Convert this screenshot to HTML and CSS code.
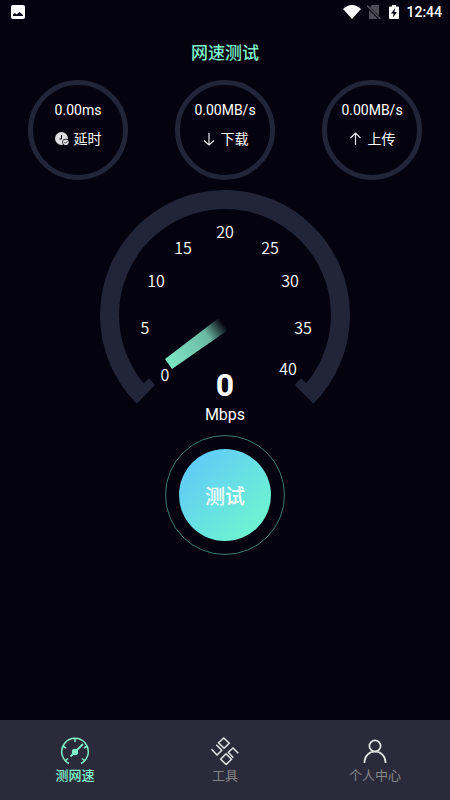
FILE: index.html
```html
<!DOCTYPE html>
<html lang="zh-CN">
<head>
<meta charset="utf-8">
<meta name="viewport" content="width=device-width, initial-scale=1">
<title>网速测试</title>
<link rel="stylesheet" href="styles.css">
</head>
<body>
<div class="app">
  <header class="status">
    <svg class="status-picture" viewBox="0 0 14 14" width="14" height="14" aria-hidden="true"><rect width="14" height="14" rx="2" fill="#fff"/><path d="M2 11V9.500L4 8L5.500 9.500L8.500 7L12 10V11Z" fill="#05030f"/></svg>
    <div class="status-right">
      <svg viewBox="0 0 18 14" width="18" height="14" aria-hidden="true"><path d="M0 4Q9-4 18 4L9 14Z" fill="#fff"/></svg>
      <svg class="status-sim" viewBox="0 0 14 14" width="14" height="14" aria-hidden="true"><path d="M5 0H12V14H2V3Z" fill="#4d4b56"/><path d="M0 1L13 14" stroke="#05030f" stroke-width="3"/><path d="M0 0.500L13.500 14" stroke="#5b5963" stroke-width="1.300"/></svg>
      <svg class="status-battery" viewBox="0 0 10 14" width="10" height="14" aria-hidden="true"><path d="M3 0H7V1.500H9Q10 1.500 10 2.500V13Q10 14 9 14H1Q0 14 0 13V2.500Q0 1.500 1 1.500H3Z" fill="#fff"/><path d="M6 3L2 8.500H4.500L4 12.500L8 7H5.500Z" fill="#05030f"/></svg>
      <time class="clock">12:44</time>
    </div>
  </header>
  <main>
    <h1 class="title">网速测试</h1>
    <section class="metrics">
      <div class="metric">
        <span class="value">0.00ms</span>
        <span class="label">
          <svg viewBox="0 0 14 14" width="14" height="14" aria-hidden="true"><circle cx="6.500" cy="6.500" r="6.500" fill="#dedee0"/><path d="M6.500 3V7H4.500" fill="none" stroke="#05030f"/><circle cx="10.800" cy="10.200" r="3.500" fill="#05030f"/><circle cx="10.800" cy="10.200" r="2.800" fill="#dedee0"/><path d="M9.500 10.200L10.500 11.200L12.300 9.300" fill="none" stroke="#05030f" stroke-width=".8"/></svg>
          延时
        </span>
      </div>
      <div class="metric">
        <span class="value">0.00MB/s</span>
        <span class="label">
          <svg viewBox="0 0 14 14" width="14" height="14" aria-hidden="true"><path d="M7 1V13M2 8.500L7 13L12 8.500" fill="none" stroke="#e6e6e8" stroke-width="1.200"/></svg>
          下载
        </span>
      </div>
      <div class="metric">
        <span class="value">0.00MB/s</span>
        <span class="label">
          <svg viewBox="0 0 14 14" width="14" height="14" aria-hidden="true"><path d="M6.500 13V1M1.500 6L6.500 1L11.500 6" fill="none" stroke="#e6e6e8" stroke-width="1.200"/></svg>
          上传
        </span>
      </div>
    </section>
    <section class="gauge">
      <svg class="dial" viewBox="0 0 250 214" aria-label="0 Mbps" role="img">
        <defs>
          <linearGradient id="needle" gradientUnits="userSpaceOnUse" x1="68" y1="174" x2="124" y2="134">
            <stop offset="0" stop-color="#7ee8c6"/>
            <stop offset=".7" stop-color="#6bb9a3"/>
            <stop offset="1" stop-color="#6bb9a3" stop-opacity="0"/>
          </linearGradient>
        </defs>
        <path d="M43.300 206.700A115.500 115.500 0 1 1 206.700 206.700" fill="none" stroke="#222438" stroke-width="19"/>
        <path d="M36.600 213.400L55 195L49 188L40 197L30 206ZM213.400 213.400L195 195L201 188L210 197L220 206Z" fill="#222438"/>
        <path d="M65 169L120 127L128 140L72 179Z" fill="url(#needle)"/>
        <g class="ticks">
          <text x="65" y="191">0</text>
          <text x="45" y="144">5</text>
          <text x="56" y="97">10</text>
          <text x="83" y="64">15</text>
          <text x="125" y="48">20</text>
          <text x="170" y="64">25</text>
          <text x="190" y="97">30</text>
          <text x="203" y="144">35</text>
          <text x="188" y="185">40</text>
        </g>
      </svg>
      <div class="reading">
        <strong class="speed">0</strong>
        <span class="unit">Mbps</span>
      </div>
    </section>
    <div class="ring">
      <button class="start" type="button">测试</button>
    </div>
  </main>
  <nav class="tabs">
    <a class="tab active" href="#speed">
      <svg viewBox="0 0 30 30" width="30" height="30" aria-hidden="true"><g fill="none" stroke="#80f0ca" stroke-width="1.500"><path d="M9 27.500A13.300 13.300 0 1 1 21 27.500"/><path d="M15 2V6M2.500 10L6 12M27.500 10L24 12M5 25L8 22.500M25 25L22 22.500"/><path d="M10.500 20.500L23 8" stroke-width="1.800"/></g><circle cx="15" cy="16" r="3.200" fill="#80f0ca"/></svg>
      <span>测网速</span>
    </a>
    <a class="tab" href="#tools">
      <svg viewBox="0 0 30 30" width="30" height="30" aria-hidden="true"><g fill="none" stroke="#e4e4e7" stroke-width="1.500"><path d="M13.800 2L19.300 7.300L14 12.200L8.500 6.800Z"/><path d="M16 17.800L21.500 23.300L16.200 28.500L10.700 23.300Z"/><path d="M1.500 13.300L7 19L11.800 14.300L6.300 8.700"/><path d="M28.300 17.300L23 12L18.300 16.300L23.300 21.700"/></g></svg>
      <span>工具</span>
    </a>
    <a class="tab" href="#profile">
      <svg viewBox="0 0 30 30" width="30" height="30" aria-hidden="true"><g fill="none" stroke="#e4e4e7" stroke-width="1.700"><circle cx="15" cy="10" r="5.600"/><path d="M4.500 27V26A10.500 10.500 0 0 1 25.500 26V27"/></g></svg>
      <span>个人中心</span>
    </a>
  </nav>
</div>
</body>
</html>
```
FILE: styles.css
```css
* {
  box-sizing: border-box;
}

body {
  margin: 0;
  background: #04020f;
  color: #fff;
  font-family: Roboto, "Noto Sans CJK SC", sans-serif;
}

svg {
  display: block;
}

.app {
  display: flex;
  flex-direction: column;
  min-height: 100vh;
}

main {
  flex: 1;
  padding-bottom: 24px;
}

.status,
.status-right,
.label {
  display: flex;
  align-items: center;
}

.status {
  justify-content: space-between;
  height: 24px;
  padding: 0 8px 0 11px;
}

.status-sim {
  margin-left: 6px;
}

.status-battery {
  margin: 0 7px 0 8px;
}

.clock {
  font-size: 14px;
  font-weight: 500;
}

.title {
  margin: 17px 0 15px;
  color: #80f0ca;
  font-size: 17px;
  font-weight: 500;
  line-height: 24px;
  text-align: center;
}

.metrics {
  display: flex;
  justify-content: space-between;
  padding: 0 28px;
}

.metric {
  display: flex;
  flex-direction: column;
  align-items: center;
  gap: 9px;
  width: 100px;
  height: 100px;
  padding-top: 15px;
  border: 5px solid #222438;
  border-radius: 50%;
}

.value {
  font-size: 14px;
  line-height: 20px;
}

.label {
  gap: 5px;
  font-size: 14px;
  line-height: 20px;
}

.gauge {
  display: flex;
  flex-direction: column;
  align-items: center;
  padding-top: 10px;
}

.dial {
  width: 250px;
  max-width: 100%;
}

.ticks {
  fill: #fff;
  font-family: "Noto Sans CJK SC", sans-serif;
  font-size: 16px;
  font-weight: 350;
  text-anchor: middle;
}

.reading {
  display: flex;
  flex-direction: column;
  align-items: center;
  margin-top: -37px;
}

.speed {
  font-size: 32px;
  line-height: 36px;
}

.unit {
  font-size: 16px;
  line-height: 24px;
}

.ring {
  display: flex;
  align-items: center;
  justify-content: center;
  width: 120px;
  height: 120px;
  margin: 8px auto 0;
  border: 1px solid #3e7a6e;
  border-radius: 50%;
}

.start {
  width: 92px;
  height: 92px;
  padding: 0;
  border: 0;
  border-radius: 50%;
  background: linear-gradient(135deg, #5fc4ff, #70fcc8);
  color: #fff;
  font: 500 20px "Noto Sans CJK SC", sans-serif;
}

.tabs {
  display: grid;
  grid-template-columns: repeat(3, 1fr);
  height: 80px;
  background: #2b2a3b;
}

.tab {
  display: flex;
  flex-direction: column;
  align-items: center;
  padding-top: 16px;
  color: #858589;
  font-size: 13px;
  line-height: 20px;
  text-decoration: none;
}

.active {
  color: #80f0ca;
  font-weight: 500;
}
```
